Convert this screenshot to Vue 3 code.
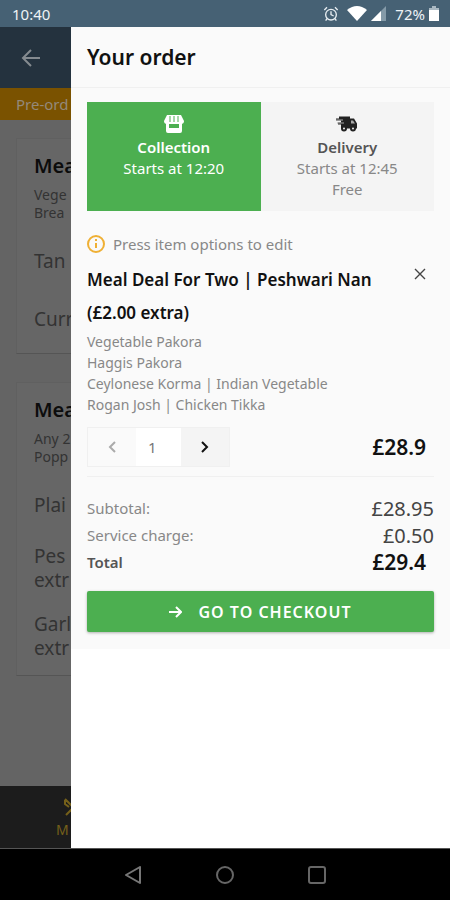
<script setup>
import { ref } from 'vue';

// Sections of the menu page, as far as they show beside the drawer
const sections = [
    {
        title: 'Mea',
        info: ['Vege', 'Brea'],
        options: [['Tan'], ['Curr']],
    },
    {
        title: 'Mea',
        info: ['Any 2', 'Popp'],
        options: [['Plai'], ['Pes', 'extr'], ['Garl', 'extr']],
    },
];

const orderTypes = [
    { id: 'collection', label: 'Collection', lines: ['Starts at 12:20'] },
    { id: 'delivery', label: 'Delivery', lines: ['Starts at 12:45', 'Free'] },
];

const contents = [
    'Vegetable Pakora',
    'Haggis Pakora',
    'Ceylonese Korma | Indian Vegetable',
    'Rogan Josh | Chicken Tikka',
];

const selected = ref('collection');
const quantity = ref(1);
</script>

<template>
    <div class="screen">
        <header class="statusbar">
            <span>10:40</span>
            <div class="status-icons">
                <svg width="16" height="16" viewBox="0 0 24 24" fill="none" stroke="#e8eef2" stroke-width="2">
                    <circle cx="12" cy="13" r="8" />
                    <path d="M12 8v5l4 2M2 6l4-4M22 6l-4-4M6 19l-2 3M18 19l2 3" />
                </svg>
                <svg class="wifi" width="20" height="15" viewBox="0 0 20 15">
                    <path d="M0 4Q10-4 20 4L10 15Z" fill="#fff" />
                </svg>
                <svg width="16" height="15" viewBox="0 0 16 15">
                    <path d="M15 0v15H0Z" fill="#849aa8" />
                    <path d="M10 5v10H0Z" fill="#fff" />
                </svg>
                <span class="percent">72%</span>
                <svg width="10" height="15" viewBox="0 0 10 15">
                    <path d="M3 0h4v2h3v3H0V2h3Z" fill="#a9b8c2" />
                    <path d="M0 4h10v11H0Z" fill="#fff" />
                </svg>
            </div>
        </header>

        <div class="stage">
            <main class="menu">
                <div class="menu-head">
                    <button class="plain" aria-label="Back">
                        <svg width="20" height="20" viewBox="0 0 20 20" fill="none" stroke="#858b90" stroke-width="2">
                            <path d="M19 10H2M10 2l-8 8 8 8" />
                        </svg>
                    </button>
                </div>
                <div class="banner">Pre-ord</div>
                <div class="menu-body">
                    <section v-for="(section, index) in sections" :key="index" class="menu-card">
                        <h2>{{ section.title }}</h2>
                        <p v-for="line in section.info" :key="line" class="menu-info">{{ line }}</p>
                        <ul>
                            <li v-for="option in section.options" :key="option[0]">
                                <div v-for="line in option" :key="line">{{ line }}</div>
                            </li>
                        </ul>
                    </section>
                </div>
                <nav class="tabbar">
                    <a href="#" class="tab">
                        <svg width="18" height="18" viewBox="0 0 18 18" fill="none" stroke="#75601a" stroke-width="2">
                            <path d="M1 1l15 15M1 2v4l4 3M2 17L12 7M12 7l1-4 3-2M12 7l4-1 1-3" />
                        </svg>
                        <span>M</span>
                    </a>
                </nav>
            </main>

            <aside class="drawer">
                <div class="order">
                    <h1>Your order</h1>
                    <div class="order-body">
                        <div class="types">
                            <button
                                v-for="type in orderTypes"
                                :key="type.id"
                                class="type"
                                :class="{ active: selected === type.id }"
                                @click="selected = type.id"
                            >
                                <svg v-if="type.id === 'collection'" width="20" height="18" viewBox="0 0 20 18">
                                    <path d="M3 0h14l3 6q0 3-3 3H3Q0 9 0 6Z" fill="currentColor" />
                                    <path d="M2 8h3v5h10V8h3v8q0 2-2 2H4q-2 0-2-2Z" fill="currentColor" />
                                    <path d="M6 1v6M10 1v6M14 1v6" stroke="#4caf50" />
                                </svg>
                                <svg v-else width="22" height="17" viewBox="0 0 22 17">
                                    <path d="M3 1h11v2h4l3 5v5H5V9H2V7h3V5H0V3h3Z" fill="#222" />
                                    <path d="M15 5h2l2 3h-4ZM0 4h7v1H0ZM1 7h7v1H1Z" fill="#aaa" />
                                    <circle cx="8" cy="13" r="2" fill="#eee" stroke="#222" stroke-width="2" />
                                    <circle cx="17" cy="13" r="2" fill="#eee" stroke="#222" stroke-width="2" />
                                </svg>
                                <strong>{{ type.label }}</strong>
                                <span v-for="line in type.lines" :key="line">{{ line }}</span>
                            </button>
                        </div>

                        <p class="hint">
                            <svg width="18" height="18" viewBox="0 0 18 18" fill="none" stroke="#efb035" stroke-width="2">
                                <circle cx="9" cy="9" r="8" />
                                <path d="M9 8v5M9 4v2" />
                            </svg>
                            Press item options to edit
                        </p>

                        <div class="item-head">
                            <h2>Meal Deal For Two | Peshwari Nan (£2.00 extra)</h2>
                            <button class="plain remove" aria-label="Remove item">
                                <svg width="12" height="12" viewBox="0 0 12 12" fill="none" stroke="#444" stroke-width="1.4">
                                    <path d="M1 1l10 10M11 1L1 11" />
                                </svg>
                            </button>
                        </div>
                        <p v-for="line in contents" :key="line" class="content-line">{{ line }}</p>

                        <div class="item-foot">
                            <div class="stepper">
                                <button aria-label="Less" :disabled="quantity <= 1" @click="quantity--">
                                    <svg width="8" height="12" viewBox="0 0 8 12" fill="none" stroke="currentColor" stroke-width="2">
                                        <path d="M7 1L2 6l5 5" />
                                    </svg>
                                </button>
                                <input v-model.number="quantity" type="text" aria-label="Quantity" />
                                <button aria-label="More" @click="quantity++">
                                    <svg width="8" height="12" viewBox="0 0 8 12" fill="none" stroke="currentColor" stroke-width="2">
                                        <path d="M1 1l5 5-5 5" />
                                    </svg>
                                </button>
                            </div>
                            <strong class="price">£28.9</strong>
                        </div>

                        <dl class="totals">
                            <div>
                                <dt>Subtotal:</dt>
                                <dd>£28.95</dd>
                            </div>
                            <div>
                                <dt>Service charge:</dt>
                                <dd>£0.50</dd>
                            </div>
                            <div class="total">
                                <dt>Total</dt>
                                <dd>£29.4</dd>
                            </div>
                        </dl>

                        <button class="checkout">
                            <svg width="13" height="12" viewBox="0 0 13 12" fill="none" stroke="currentColor" stroke-width="2">
                                <path d="M0 6h11M7 1l5 5-5 5" />
                            </svg>
                            GO TO CHECKOUT
                        </button>
                    </div>
                </div>
            </aside>
        </div>

        <footer class="navbar">
            <button class="plain" aria-label="Back">
                <svg width="18" height="18" viewBox="0 0 18 18" fill="none" stroke="#777" stroke-width="2" stroke-linejoin="round">
                    <path d="M16 1v16L2 9Z" />
                </svg>
            </button>
            <button class="plain" aria-label="Home">
                <svg width="18" height="18" viewBox="0 0 18 18" fill="none" stroke="#666" stroke-width="2">
                    <circle cx="9" cy="9" r="8" />
                </svg>
            </button>
            <button class="plain" aria-label="Overview">
                <svg width="18" height="18" viewBox="0 0 18 18" fill="none" stroke="#666" stroke-width="2">
                    <rect x="1" y="1" width="16" height="16" rx="2" />
                </svg>
            </button>
        </footer>
    </div>
</template>

<style>
body {
    margin: 0;
    background: #000;
}
</style>

<style scoped>
* {
    box-sizing: border-box;
}

.screen {
    display: flex;
    flex-direction: column;
    min-height: 100vh;
    font-family: "Noto Sans", sans-serif;
    font-size: 14px;
    color: #111;
}

h1,
h2,
p,
ul,
dl,
dd {
    margin: 0;
    padding: 0;
}

ul {
    list-style: none;
}

button {
    font-family: inherit;
    border: 0;
    cursor: pointer;
}

svg {
    display: block;
    flex: none;
}

.plain {
    padding: 0;
    background: none;
}

.statusbar {
    display: flex;
    justify-content: space-between;
    align-items: center;
    height: 27px;
    padding: 0 11px 0 12px;
    background: #466174;
    color: #eef3f6;
    font-size: 15px;
}

.status-icons {
    display: flex;
    align-items: center;
    gap: 4px;
}

.wifi {
    margin-left: 4px;
}

.percent {
    margin-left: 4px;
}

/* A strip of the menu page stays visible beside the open drawer */
.stage {
    flex: 1;
    display: grid;
    grid-template-columns: 71px minmax(0, 1fr);
}

.menu {
    display: flex;
    flex-direction: column;
    background: #646464;
    white-space: nowrap;
    overflow: hidden;
}

.menu-head {
    display: flex;
    align-items: center;
    height: 61px;
    padding: 0 21px;
    background: #24323e;
}

.banner {
    height: 32px;
    padding-left: 16px;
    line-height: 32px;
    font-size: 15px;
    background: #7a5200;
    color: #94897a;
}

.menu-body {
    flex: 1;
    display: flex;
    flex-direction: column;
    gap: 28px;
    padding: 18px 0 18px 16px;
}

.menu-card {
    padding: 12px 0 5px 17px;
    border: 1px solid #606060;
    border-right: 0;
    border-bottom-color: #555;
    background: #666;
}

.menu-card h2 {
    margin-bottom: 5px;
    font-size: 20px;
    line-height: 30px;
    font-weight: 600;
    color: #0c0c0c;
}

.menu-info {
    line-height: 18px;
    color: #333;
}

.menu-card ul {
    padding-top: 10px;
}

.menu-card li {
    display: flex;
    flex-direction: column;
    justify-content: center;
    min-height: 58px;
    padding: 10px 0;
    font-size: 19px;
    line-height: 24px;
    color: #333;
}

.tabbar {
    height: 62px;
    padding: 12px 0 0 56px;
    background: #1c1c1c;
}

.tab {
    display: inline-flex;
    flex-direction: column;
    color: #75601a;
    text-decoration: none;
    line-height: 28px;
}

.tab svg {
    margin-left: 8px;
}

.drawer {
    background: #fff;
}

.order {
    background: #fafafa;
    padding-bottom: 17px;
}

h1 {
    padding: 0 16px;
    border-bottom: 1px solid #f0f0f0;
    font-size: 21px;
    line-height: 60px;
    font-weight: 600;
}

.order-body {
    padding: 14px 16px 0;
}

.types {
    display: grid;
    grid-template-columns: 1fr 1fr;
    margin-bottom: 21px;
}

.type {
    display: flex;
    flex-direction: column;
    align-items: center;
    min-height: 109px;
    padding: 13px 0 10px;
    background: #f4f4f4;
    color: #888;
    font-size: 15px;
    line-height: 21px;
}

.type svg {
    height: 18px;
    margin-bottom: 4px;
}

.type strong {
    font-weight: 600;
    color: #555;
}

.type.active,
.type.active strong {
    background: #4caf50;
    color: #fff;
}

.hint {
    display: flex;
    align-items: center;
    gap: 8px;
    font-size: 15px;
    line-height: 24px;
    color: #888;
}

.item-head {
    display: flex;
    justify-content: space-between;
    align-items: flex-start;
    padding: 7px 0 2px;
}

.item-head h2 {
    max-width: 300px;
    font-size: 17px;
    line-height: 33px;
    font-weight: 600;
}

.remove {
    margin: 5px 8px;
}

.content-line {
    font-size: 14px;
    line-height: 21px;
    color: #888;
}

.item-foot {
    display: flex;
    justify-content: space-between;
    align-items: center;
    padding: 12px 8px 9px 0;
    border-bottom: 1px solid #f0f0f0;
}

.stepper {
    display: flex;
    height: 40px;
    border: 1px solid #f0f0f0;
}

.stepper button {
    display: flex;
    justify-content: center;
    align-items: center;
    width: 48px;
    background: #f4f4f4;
    color: #111;
}

.stepper button:disabled {
    background: #fafafa;
    color: #aaa;
}

.stepper input {
    width: 45px;
    padding: 0 12px;
    border: 0;
    background: #fff;
    font-family: inherit;
    font-size: 15px;
    color: #777;
}

.price {
    font-size: 21px;
    line-height: 27px;
    font-weight: 600;
}

.totals {
    padding: 18px 0 15px;
}

.totals div {
    display: flex;
    justify-content: space-between;
    line-height: 27px;
}

.totals dt {
    font-size: 15px;
    color: #888;
}

.totals dd {
    font-size: 20px;
    color: #444;
}

.totals .total {
    padding-right: 8px;
    font-weight: 600;
}

.totals .total dt {
    color: #555;
}

.totals .total dd {
    font-size: 21px;
    color: #111;
}

.checkout {
    display: flex;
    justify-content: center;
    align-items: center;
    gap: 16px;
    width: 100%;
    height: 41px;
    border-radius: 2px;
    background: #4caf50;
    box-shadow: 0 1px 3px rgba(0, 0, 0, 0.3);
    color: #fff;
    font-size: 16px;
    font-weight: 600;
    letter-spacing: 1px;
}

.navbar {
    display: flex;
    justify-content: center;
    align-items: center;
    gap: 74px;
    height: 52px;
    border-top: 1px solid #555;
    background: #000;
}
</style>
